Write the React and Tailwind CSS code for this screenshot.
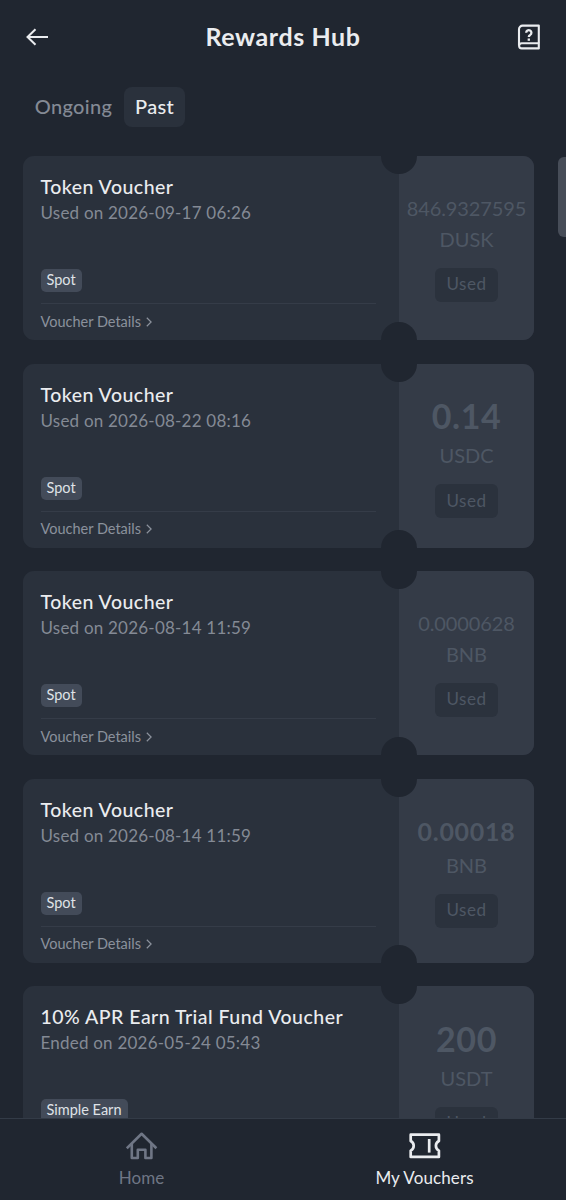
import { useState } from 'react';
import clsx from 'clsx';

const vouchers = [
  { title: 'Token Voucher', date: 'Used on 2026-09-17 06:26', tag: 'Spot', amount: '846.9327595', unit: 'DUSK', size: 'sm' },
  { title: 'Token Voucher', date: 'Used on 2026-08-22 08:16', tag: 'Spot', amount: '0.14', unit: 'USDC', size: 'lg' },
  { title: 'Token Voucher', date: 'Used on 2026-08-14 11:59', tag: 'Spot', amount: '0.0000628', unit: 'BNB', size: 'sm' },
  { title: 'Token Voucher', date: 'Used on 2026-08-14 11:59', tag: 'Spot', amount: '0.00018', unit: 'BNB', size: 'md' },
  { title: '10% APR Earn Trial Fund Voucher', date: 'Ended on 2026-05-24 05:43', tag: 'Simple Earn', amount: '200', unit: 'USDT', size: 'lg' },
];

// Long amounts get a smaller, lighter face
const amountSizes = {
  sm: 'text-[20px] leading-[27px] tracking-[-0.1px]',
  md: 'text-[25px] leading-[34px] font-bold tracking-[0.7px]',
  lg: 'text-[34px] leading-[45px] font-bold tracking-[0.6px]',
};

const BackIcon = () => (
  <svg width="24" height="20" viewBox="0 0 24 20" fill="none" stroke="currentColor" strokeWidth="2">
    <path d="M10.5 2.2 2.5 10l8 7.8M2.7 10H23" />
  </svg>
);

const HelpBookIcon = () => (
  <svg width="24" height="26" viewBox="0 0 24 26" fill="none" stroke="currentColor" strokeWidth="2.1" strokeLinejoin="round">
    <path d="M21.8 19.2V1.6H5.6A3.6 3.6 0 0 0 2 5.2v16.2" />
    <path d="M21.8 19.2H4.7a2.6 2.6 0 0 0 0 5.2h17.1v-5.2Z" />
    <path d="M9.2 8.7a2.6 2.6 0 1 1 4 2.200c-1 .6-1.400 1-1.400 2.100" strokeWidth="2.3" />
    <path d="M11.800 14.500v2.300" strokeWidth="2.3" />
  </svg>
);

const HomeIcon = () => (
  <svg width="32" height="28" viewBox="0 0 32 28" fill="none" stroke="currentColor" strokeWidth="2.6" strokeLinejoin="round">
    <path d="M.8 16.200 15.600 1.800l14.800 14.400" />
    <path d="M5.800 12v14h6V17.800h7.600V26h6V12" />
  </svg>
);

const TicketIcon = () => (
  <svg width="32" height="26" viewBox="0 0 32 26" fill="none" stroke="currentColor" strokeWidth="2.7" strokeLinejoin="round">
    <path d="M1.700 1.700h28.200v6.300c-1.900 1-3 2.700-3 4.800s1.100 3.800 3 4.800v6.300H1.700v-6.300c1.900-1 3-2.700 3-4.800s-1.100-3.800-3-4.800Z" />
    <path d="M20.200 6v13.600" />
  </svg>
);

const VoucherCard = ({ voucher }) => (
  <div className="relative flex h-[184px] shrink-0 overflow-hidden rounded-[11px] bg-[#2a313c]">
    {/* Left side */}
    <div className="flex w-[376px] shrink-0 flex-col pl-[17.5px] pr-[23px] pt-[18px]">
      <h2 className="text-[19.5px] leading-[25px] font-medium tracking-[0.48px] text-[#eaecef]">{voucher.title}</h2>
      <p className="text-[17px] leading-[27px] tracking-[0.22px] text-[#848a95]">{voucher.date}</p>
      <span className="mt-[43px] flex h-[23px] w-fit items-center rounded-[5px] bg-[#434b59] px-[6px] pb-px text-[14.5px] text-[#dfe2e7]">
        {voucher.tag}
      </span>
      <button className="mt-[11px] flex h-[36px] items-center border-t border-[#353c48] text-left text-[14.5px] text-[#8b919c]">
        <span>Voucher Details</span>
        <svg className="ml-[5px]" width="6" height="10" viewBox="0 0 6 10" fill="none" stroke="currentColor" strokeWidth="1.2">
          <path d="m.8.8 4.3 4.2L.8 9.2" />
        </svg>
      </button>
    </div>

    {/* Right side */}
    <div className="flex flex-1 flex-col items-center justify-center bg-[#343b47] text-[#4e5764]">
      <div className={clsx('whitespace-nowrap', amountSizes[voucher.size])}>{voucher.amount}</div>
      <div className="mt-1 text-[20px] leading-[27px]">{voucher.unit}</div>
      <div className="mt-[15px] flex h-[34px] w-[63px] items-center justify-center rounded-[6px] bg-[#2b323d] pb-px text-[17px] tracking-[0.5px]">
        Used
      </div>
    </div>

    {/* Notches */}
    <div className="absolute left-[358px] -top-[18px] size-9 rounded-full bg-[#202630]" />
    <div className="absolute left-[358px] -bottom-[18px] size-9 rounded-full bg-[#202630]" />
  </div>
);

const App = () => {
  const [tab, setTab] = useState('Past');

  return (
    <div className="relative flex h-[1200px] w-[566px] flex-col overflow-hidden bg-[#202630] font-['Lato',sans-serif]">
      {/* Header */}
      <header className="flex h-[73px] shrink-0 items-center justify-between px-[25px] text-[#eaecef]">
        <BackIcon />
        <h1 className="text-[25px] font-bold tracking-[0.6px]">Rewards Hub</h1>
        <HelpBookIcon />
      </header>

      {/* Tabs */}
      <div className="flex h-[83px] shrink-0 gap-[12px] pl-[35px] pt-[14px] text-[20px]">
        {['Ongoing', 'Past'].map((name) => (
          <button
            key={name}
            onClick={() => setTab(name)}
            className={clsx(
              'flex h-10 items-center justify-center rounded-[8px] pb-[2px] font-medium tracking-[0.3px]',
              tab === name ? 'w-[61px] bg-[#2a313c] text-[#eaecef]' : 'w-[77px] text-[#848a95]'
            )}
          >
            {name}
          </button>
        ))}
      </div>

      {/* Voucher list */}
      <main className="flex min-h-0 flex-1 flex-col gap-[23.5px] overflow-hidden pl-[23px] pr-[32px]">
        {vouchers.map((voucher, i) => (
          <VoucherCard key={i} voucher={voucher} />
        ))}
      </main>

      {/* Scroll thumb */}
      <div className="absolute right-0 top-[157px] h-20 w-2 rounded-l-[6px] bg-[#474d58]" />

      {/* Bottom navigation */}
      <nav className="grid h-[82px] shrink-0 grid-cols-2 border-t border-[#333b47] text-[17px]">
        <button className="flex flex-col items-center pt-[13px] text-[#6f7685]">
          <HomeIcon />
          <span className="mt-[5px]">Home</span>
        </button>
        <button className="flex flex-col items-center pt-[13px] text-[#eaecef]">
          <span className="flex h-7 items-center"><TicketIcon /></span>
          <span className="mt-[5px] tracking-[0.1px]">My Vouchers</span>
        </button>
      </nav>
    </div>
  );
};

export default App;
